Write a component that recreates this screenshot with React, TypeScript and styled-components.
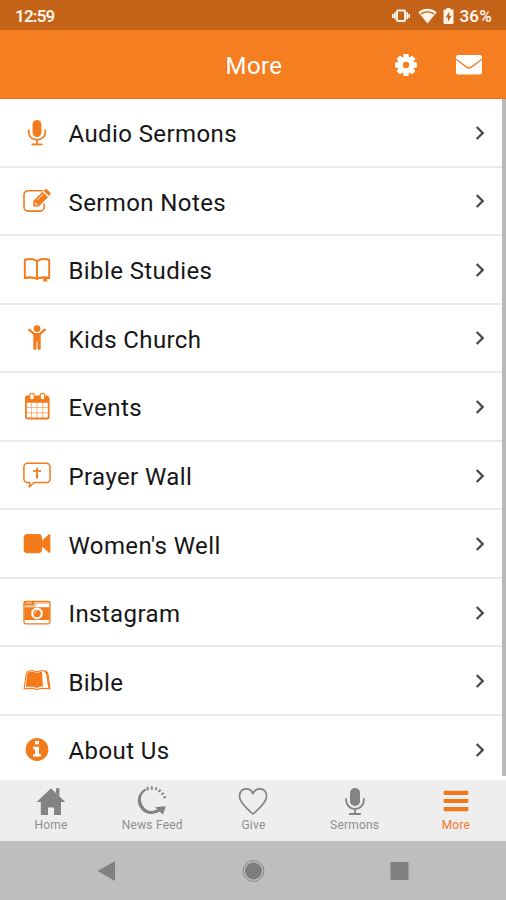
import React from "react";
import styled, { createGlobalStyle } from "styled-components";

const orange = "#f47b1b";

const GlobalStyle = createGlobalStyle`
  *, *::before, *::after { box-sizing: border-box; }
  body { margin: 0; background: #fff; font-family: Roboto, "Liberation Sans", sans-serif; }
`;

const Screen = styled.div`
  display: flex;
  flex-direction: column;
  width: 506px;
  height: 900px;
  overflow: hidden;
  background: #fff;
`;

const StatusBar = styled.div`
  flex: 0 0 30px;
  display: flex;
  align-items: center;
  justify-content: space-between;
  padding: 2px 14px 0 15px;
  background: #c46318;
  color: #fff3ea;
`;

const StatusText = styled.span<{ $spacing: number }>`
  font-size: 17px;
  line-height: 20px;
  font-weight: 600;
  letter-spacing: ${(p) => p.$spacing}px;
`;

const StatusIcons = styled.div`
  display: flex;
  align-items: center;
  height: 20px;
`;

const StatusGlyph = styled.svg<{ $gap: number }>`
  display: block;
  margin-right: ${(p) => p.$gap}px;
`;

const Header = styled.header`
  flex: 0 0 69px;
  display: grid;
  grid-template-columns: 1fr auto 1fr;
  align-items: center;
  background: #f57e20;
  border-bottom: 1px solid #ee7315;
  color: #fff;
  padding-top: 3px;
`;

const Title = styled.h1`
  grid-column: 2;
  margin: 0;
  padding-left: 2px;
  font-size: 24px;
  line-height: 28px;
  font-weight: 400;
  letter-spacing: 0.4px;
`;

const Actions = styled.div`
  display: flex;
  justify-content: flex-end;
  align-items: center;
  gap: 38px;
  padding: 0 24px 1px 0;
`;

const Scroller = styled.div`
  flex: 0 0 681px;
  display: flex;
  overflow: hidden;
  background: #fff;
`;

const List = styled.ul`
  flex: 1;
  margin: 0;
  padding: 0;
  list-style: none;
  height: 681px;
`;

const Row = styled.li`
  display: flex;
  align-items: center;
  height: 68.56px;
  padding: 1px 17px 0 22px;
  border-bottom: 2px solid #ebebeb;
`;

const RowIcon = styled.svg`
  display: block;
  flex: 0 0 30px;
  width: 30px;
  height: 30px;
  overflow: visible;
  color: ${orange};
`;

const RowLabel = styled.span`
  flex: 1;
  margin-left: 16.5px;
  padding-top: 3px;
  font-size: 24px;
  line-height: 30px;
  font-weight: 380;
  color: #161616;
  letter-spacing: 0.4px;
`;

const Chevron = styled.svg`
  display: block;
  width: 10px;
  height: 16px;
`;

const ScrollThumb = styled.div`
  flex: 0 0 4px;
  height: 677px;
  background: #b9b9b9;
`;

const TabBar = styled.nav`
  flex: 0 0 61px;
  display: grid;
  grid-template-columns: repeat(5, 1fr);
  background: #eeeeee;
`;

const Tab = styled.div<{ $active?: boolean }>`
  display: flex;
  flex-direction: column;
  align-items: center;
  padding: 4px 0 0 1px;
  color: ${(p) => (p.$active ? "#f0781e" : "#838383")};
`;

const TabGlyph = styled.svg`
  display: block;
  width: 34px;
  height: 34px;
`;

const TabLabel = styled.span<{ $active?: boolean }>`
  font-size: 12px;
  line-height: 14px;
  font-weight: 370;
  letter-spacing: 0.2px;
  color: ${(p) => (p.$active ? "#f5762f" : "#8f8f8f")};
`;

const SystemNav = styled.div`
  flex: 1;
  display: flex;
  justify-content: center;
  align-items: center;
  gap: 122px;
  background: #bebebe;
`;

const NavGlyph = styled.svg`
  display: block;
  width: 24px;
  height: 24px;
`;

const line = { fill: "none", stroke: "currentColor", strokeLinecap: "round", strokeLinejoin: "round" } as const;

const Mic = () => (
  <>
    <rect x="10.6" y="2" width="8.8" height="17" rx="4.4" fill="currentColor" />
    <path d="M6.7 12v2.3a8.3 7.6 0 0 0 16.6 0V12M15 22v4M10.2 26.3h9.6" {...line} strokeWidth="1.7" />
  </>
);

const Edit = () => (
  <>
    <path d="M20.2 4.7H6A4 4 0 0 0 2 8.7v12.4a4 4 0 0 0 4 4h12.2a4 4 0 0 0 4-4v-3" {...line} strokeWidth="1.6" />
    <path d="M11.2 15v5.5h5.5L26 11.2l-5.5-5.5Z" fill="currentColor" />
    <path d="m21.5 4.8 1.4-1.4c.8-.8 1.5-.8 2.2 0l3 3c.8.8.8 1.5 0 2.2l-1.3 1.5Z" fill="currentColor" />
    <path d="m15.2 14 6-6M13 16.5v1.1h1.3v1.3h1.3" fill="none" stroke="#fff" strokeWidth="0.9" />
  </>
);

const Book = () => (
  <>
    <path d="M15 6C11.8 3.9 7.2 3.7 2.8 4.7v18c4.7-.8 9.2-.5 12.2 1 3-1.5 7.5-1.8 12.2-1v-18C22.8 3.7 18.2 3.9 15 6v17.5" {...line} strokeWidth="1.9" />
    <path d="M2.4 23.5c5-.8 9.8-.5 12.6.7 2.8-1.2 7.8-1.5 12.6-.7" {...line} strokeWidth="1.2" />
    <path d="M21.4 22.6h3.7v4.7l-1.9-1.4-1.8 1.4Z" fill="currentColor" />
  </>
);

const Child = () => (
  <>
    <circle cx="15" cy="5.6" r="3.4" fill="currentColor" />
    <path d="m7.3 6.8 5.3 4.6h4.8l5.3-4.6" {...line} strokeWidth="2.4" />
    <path d="M11.3 10h7.4v15.7a1 1 0 0 1-1 1h-1.2a1 1 0 0 1-1-1v-7h-1v7a1 1 0 0 1-1 1h-1.2a1 1 0 0 1-1-1Z" fill="currentColor" />
  </>
);

const Calendar = () => (
  <>
    <path d="M5 3.6h20a2 2 0 0 1 2 2v5.200H3V5.600a2 2 0 0 1 2-2Z" fill="currentColor" />
    <rect x="3.9" y="5.3" width="22.8" height="21.2" rx="1.8" {...line} strokeWidth="1.8" />
    <path d="M9.3 11v15M15 11v15M20.7 11v15M4 15.5h22M4 20.8h22" {...line} strokeWidth="1" opacity="0.55" />
    <rect x="7.7" y="1.4" width="4.5" height="6.5" rx="2" fill="#fff" stroke="currentColor" strokeWidth="1.2" />
    <rect x="18.3" y="1.4" width="4.5" height="6.5" rx="2" fill="#fff" stroke="currentColor" strokeWidth="1.2" />
  </>
);

const Prayer = () => (
  <>
    <path d="M5.5 2.2h19a3.6 3.6 0 0 1 3.6 3.6v12a3.6 3.6 0 0 1-3.6 3.6H12.4l-5.2 4.6.7-4.6H5.5a3.6 3.6 0 0 1-3.6-3.6v-12a3.6 3.6 0 0 1 3.6-3.6Z" {...line} strokeWidth="1.5" />
    <path d="M14 6.7h2l-.2 2.6 3.1-.2v1.900l-3.100-.2.3 6.600h-2.200l.3-6.600-3.100.2V9.100l3.100.2Z" fill="currentColor" />
  </>
);

const Video = () => (
  <>
    <rect x="1.7" y="4.9" width="18.4" height="19.4" rx="3.8" fill="currentColor" />
    <path d="m18.5 12.9 8.2-7.3c.8-.7 1.7-.3 1.7.8v16.4c0 1.1-.9 1.5-1.7.8l-8.2-7.3Z" fill="currentColor" />
  </>
);

const Camera = () => (
  <>
    <rect x="2" y="3.3" width="26" height="22.5" rx="1.7" {...line} strokeWidth="1.3" />
    <path d="M2.4 9.3h25.2v12.6H2.400ZM2.400 3.800h11l-1.500 3.300H2.400Z" fill="currentColor" />
    <path d="M4.2 4.9h5.3" stroke="#fff" strokeWidth="0.9" />
    <path d="M2.2 7.9h10.700l2-2.900h12.700" {...line} strokeWidth="0.9" />
    <circle cx="15" cy="15.4" r="4.8" fill="currentColor" stroke="#fff" strokeWidth="2.2" />
    <path d="M12.7 15c.3-1.2 1-2 2.2-2.2" {...line} stroke="#fff" strokeWidth="0.9" />
  </>
);

const Bible = () => (
  <>
    <path d="M4.2 8.500C4.500 5.500 6.500 4.700 9 4.700c2.500 0 4.500.4 6 1.300 1.500-.9 3.500-1.300 6-1.300 3 0 4.600 1 5 3.800l2 14.500c-4.800-.9-9.300-.9-13 .4-3.700-1.300-8.200-1.300-13-.4Z" {...line} strokeWidth="1.1" />
    <path d="M5 8.500C5.500 6.200 7.200 5.700 9.500 5.700c2.200 0 4 .5 5.500 1.500 1.400-.9 3.200-1.500 5-1.500l.9 14.900c-2.400 0-4.300.4-5.900 1.300-3.200-1.300-7.200-1.500-11.200-.9Z" fill="currentColor" />
    <path d="M23.300 5.600c1.400.7 1.800 1.700 2 3.200l1.600 12.400" {...line} strokeWidth="1.8" />
  </>
);

const Info = () => (
  <>
    <circle cx="15" cy="14.5" r="11.4" fill="currentColor" />
    <path d="M13.2 5.9h3.8v3.4h-3.8ZM11.2 11.7H17v7.2h1.9v2.5h-7.7v-2.5h1.9v-4.7h-1.9Z" fill="#fff" />
  </>
);

const rows: { label: string; icon: React.FC }[] = [
  { label: "Audio Sermons", icon: Mic },
  { label: "Sermon Notes", icon: Edit },
  { label: "Bible Studies", icon: Book },
  { label: "Kids Church", icon: Child },
  { label: "Events", icon: Calendar },
  { label: "Prayer Wall", icon: Prayer },
  { label: "Women's Well", icon: Video },
  { label: "Instagram", icon: Camera },
  { label: "Bible", icon: Bible },
  { label: "About Us", icon: Info },
];

const Home = () => (
  <>
    <path d="M2.7 18 17 4.2 31.3 18H27v13h-7v-7.5h-6V31H6.8V18Z" fill="currentColor" />
    <path d="M22 4.2h3.4v8.6L22 9Z" fill="currentColor" />
  </>
);

const NewsFeed = () => (
  <>
    <path d="M10.5 4.6C3.3 8.500.8 16 4.500 22.900c4 7.100 12.500 9.200 20.500 4.600l-1.800-2.400c-6 3.300-11.700 2-15.100-3.200C4.300 15.900 5.800 9.300 11.600 6.200Z" fill="currentColor" />
    <path d="m20 23.200 10.800-.9-2.800 8.500Z" fill="currentColor" />
    <path d="m12.2 2.8 1 3.5M16.8 2.2v3.500M21.500 3.200l-.8 2.800M25.600 5.600l-1.900 2.400M28.900 9l-2.500 1.500M31 13l-2.700.6" fill="none" stroke="currentColor" strokeWidth="1.9" />
  </>
);

const Heart = () => (
  <path d="M17 30C14.3 27.2 3.5 19.5 3.5 12.5c0-5.6 3.2-7.7 6.6-7.7 3.7 0 6 2.6 6.9 4.8.9-2.2 3.2-4.8 6.9-4.8 3.4 0 6.6 2.1 6.6 7.7C30.5 19.5 19.7 27.2 17 30Z" {...line} strokeWidth="1.7" />
);

const TabMic = () => (
  <>
    <rect x="12" y="4" width="10" height="18" rx="4.8" fill="currentColor" />
    <path d="M8.2 15v1.5a8.8 8.5 0 0 0 17.6 0V15M17 25.5v4.3M11.800 30h10.400" {...line} strokeWidth="1.8" />
  </>
);

const Menu = () => <path d="M4.7 8.9h24.6M4.7 17h24.6M4.7 25.2h24.6" {...line} strokeWidth="4.2" strokeLinecap="butt" />;

const tabs: { label: string; icon: React.FC; active?: boolean }[] = [
  { label: "Home", icon: Home },
  { label: "News Feed", icon: NewsFeed },
  { label: "Give", icon: Heart },
  { label: "Sermons", icon: TabMic },
  { label: "More", icon: Menu, active: true },
];

export default function App() {
  return (
    <Screen>
      <GlobalStyle />
      <StatusBar>
        <StatusText $spacing={-0.8}>12:59</StatusText>
        <StatusIcons>
          <StatusGlyph $gap={8} width="18" height="16" viewBox="0 0 18 16">
            <rect x="5" y="2.5" width="8" height="10.5" rx="1" fill="none" stroke="currentColor" strokeWidth="2" />
            <path d="M2.9 4.300v7M15.100 4.300v7M.8 6v4M17.200 6v4" stroke="currentColor" strokeWidth="1.7" />
          </StatusGlyph>
          <StatusGlyph $gap={6} width="19" height="16" viewBox="0 0 19 16">
            <path d="M.3 4.3C5.8-.3 13.2-.3 18.7 4.3L9.5 15.5Z" fill="currentColor" />
            <path d="M3 5.9c4-2.500 9-2.500 13 0" fill="none" stroke="#c46318" strokeWidth="1.3" />
          </StatusGlyph>
          <StatusGlyph $gap={5} width="11" height="17" viewBox="0 0 11 17">
            <path d="M3.5 0h4v1.500h2a1 1 0 0 1 1 1V15a1 1 0 0 1-1 1h-8a1 1 0 0 1-1-1V2.500a1 1 0 0 1 1-1h2Z" fill="currentColor" />
            <path d="M6.3 3.600 2.700 9.500h2.200V14L8.500 7.800H6.300Z" fill="#c46318" />
          </StatusGlyph>
          <StatusText $spacing={0.2}>36%</StatusText>
        </StatusIcons>
      </StatusBar>

      <Header>
        <Title>More</Title>
        <Actions>
          <svg width="24" height="24" viewBox="0 0 24 24">
            <g fill="#fff">
              {[0, 45, 90, 135].map((angle) => (
                <rect key={angle} x="9.3" y="1" width="5.4" height="22" rx="1.2" transform={`rotate(${angle} 12 12)`} />
              ))}
              <circle cx="12" cy="12" r="8.5" />
            </g>
            <circle cx="12" cy="12" r="3.2" fill="#f57e20" />
          </svg>
          <svg width="26" height="22" viewBox="0 0 26 22">
            <rect x="0" y="1" width="26" height="19.5" rx="2" fill="#fff" />
            <path d="m0 5.2 10.7 7.900q2.300 1.700 4.600 0L26 5.200" fill="none" stroke="#f57e20" strokeWidth="1.4" />
          </svg>
        </Actions>
      </Header>

      <Scroller>
        <List>
          {rows.map(({ label, icon: Icon }) => (
            <Row key={label}>
              <RowIcon viewBox="0 0 30 30"><Icon /></RowIcon>
              <RowLabel>{label}</RowLabel>
              <Chevron viewBox="0 0 10 16">
                <path d="m1.7 2 6 6-6 6" fill="none" stroke="#484848" strokeWidth="2.3" />
              </Chevron>
            </Row>
          ))}
        </List>
        <ScrollThumb />
      </Scroller>

      <TabBar>
        {tabs.map(({ label, icon: Icon, active }) => (
          <Tab key={label} $active={active}>
            <TabGlyph viewBox="0 0 34 34"><Icon /></TabGlyph>
            <TabLabel $active={active}>{label}</TabLabel>
          </Tab>
        ))}
      </TabBar>

      <SystemNav>
        <NavGlyph viewBox="0 0 24 24"><path d="M2.5 12 20 2v20Z" fill="#808080" /></NavGlyph>
        <NavGlyph viewBox="0 0 24 24">
          <circle cx="12.5" cy="12" r="8.5" fill="#7d7d7d" />
          <circle cx="12.5" cy="12" r="10.4" fill="none" stroke="#858585" strokeWidth="1" />
        </NavGlyph>
        <NavGlyph viewBox="0 0 24 24"><rect x="3.5" y="3" width="18" height="18" rx="0.5" fill="#808080" /></NavGlyph>
      </SystemNav>
    </Screen>
  );
}
